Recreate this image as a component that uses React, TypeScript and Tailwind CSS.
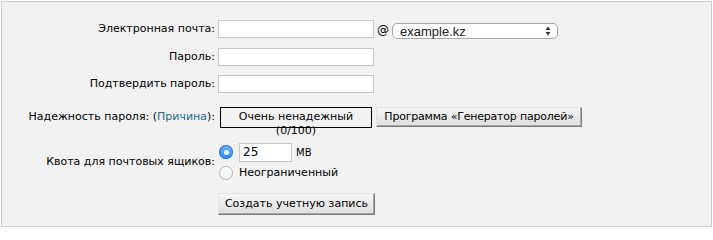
const label = "pr-[3px] text-right text-[11px] text-black";
const input = "h-[18px] w-[156px] border border-[#c8c8c8] bg-white";

function Radio({ checked }: { checked?: boolean }) {
  return checked ? (
    <span className="flex h-[14px] w-[14px] shrink-0 items-center justify-center rounded-full bg-gradient-to-b from-[#6cb3fa] to-[#2c88f4] shadow-[inset_0_0_0_1px_#2a7ee0]">
      <span className="block h-[5px] w-[5px] rounded-full bg-white" />
    </span>
  ) : (
    <span className="block h-[14px] w-[14px] shrink-0 rounded-full border border-[#b5b5b5] bg-gradient-to-b from-white to-[#f4f4f4]" />
  );
}

const button =
  "whitespace-nowrap border border-t-[#e3e3e3] border-l-[#e3e3e3] border-r-[#7a7a7a] border-b-[#7a7a7a] bg-gradient-to-b from-[#f6f6f6] to-[#dedede] text-[11px] text-black shadow-[inset_-1px_-1px_0_#a9a9a9]";

export default function App() {
  return (
    <div className="h-[229px] w-[713px] p-px font-['DejaVu_Sans',sans-serif]">
      <div className="h-[226px] border border-[#cccccc] bg-[#f2f2f2]">
        <div className="grid grid-cols-[216px_1fr] pt-[18px]">
          <div className={`${label} flex h-[19px] items-center justify-end`}>Электронная почта:</div>
          <div className="flex h-[19px] items-start">
            <div className={input} />
            <span className="mx-[3px] mt-[1px] text-[12px] text-black">@</span>
            <div className="mt-[3px] flex h-[16px] w-[166px] items-center justify-between rounded-[5px] border border-[#a8a8a8] bg-white pl-[7px] pr-[6px] font-['Liberation_Sans',sans-serif] text-[13px] text-[#222]">
              <span className="leading-none">example.kz</span>
              <svg width="6" height="10" viewBox="0 0 6 10">
                <path d="M3 0.5 L5.5 4 H0.5 Z M3 9.5 L5.5 6 H0.5 Z" fill="#333" />
              </svg>
            </div>
          </div>

          <div className={`${label} mt-[9px] flex h-[18px] items-center justify-end`}>Пароль:</div>
          <div className="mt-[9px] h-[18px]">
            <div className={input} />
          </div>

          <div className={`${label} mt-[9px] flex h-[18px] items-center justify-end`}>Подтвердить пароль:</div>
          <div className="mt-[9px] h-[18px]">
            <div className={input} />
          </div>

          <div className={`${label} mt-[14px] flex h-[21px] items-center justify-end`}>
            Надежность пароля: (<span className="text-[#1f6a8c]">Причина</span>):
          </div>
          <div className="mt-[14px] flex h-[21px] items-start">
            <div className="ml-[2px] h-[21px] w-[152px] shrink-0 border border-black pt-[2px] text-center text-[11px] leading-[14px] text-black">
              Очень ненадежный
              <br />
              (0/100)
            </div>
            <button className={`${button} ml-[4px] h-[20px] w-[206px] shrink-0 tracking-[-0.2px]`}>
              Программа «Генератор паролей»
            </button>
          </div>

          <div className={`${label} mt-[14px] flex h-[40px] items-center justify-end`}>Квота для почтовых ящиков:</div>
          <div className="mt-[14px] flex h-[40px] flex-col text-[11px] text-black">
            <div className="flex h-[20px] items-center">
              <span className="ml-px block">
                <Radio checked />
              </span>
              <div className="ml-[6px] flex h-[19px] w-[53px] items-center border border-[#c8c8c8] bg-white pl-[3px] text-[12px]">
                25
              </div>
              <span className="ml-[4px] text-[10px]">MB</span>
            </div>
            <div className="mt-[3px] flex h-[16px] items-center">
              <span className="ml-px block">
                <Radio />
              </span>
              <span className="ml-[6px] text-[11px]">Неограниченный</span>
            </div>
          </div>

          <div className="mt-[8px]" />
          <div className="mt-[8px]">
            <button className={`${button} h-[22px] w-[157px]`}>Создать учетную запись</button>
          </div>
        </div>
      </div>
    </div>
  );
}
